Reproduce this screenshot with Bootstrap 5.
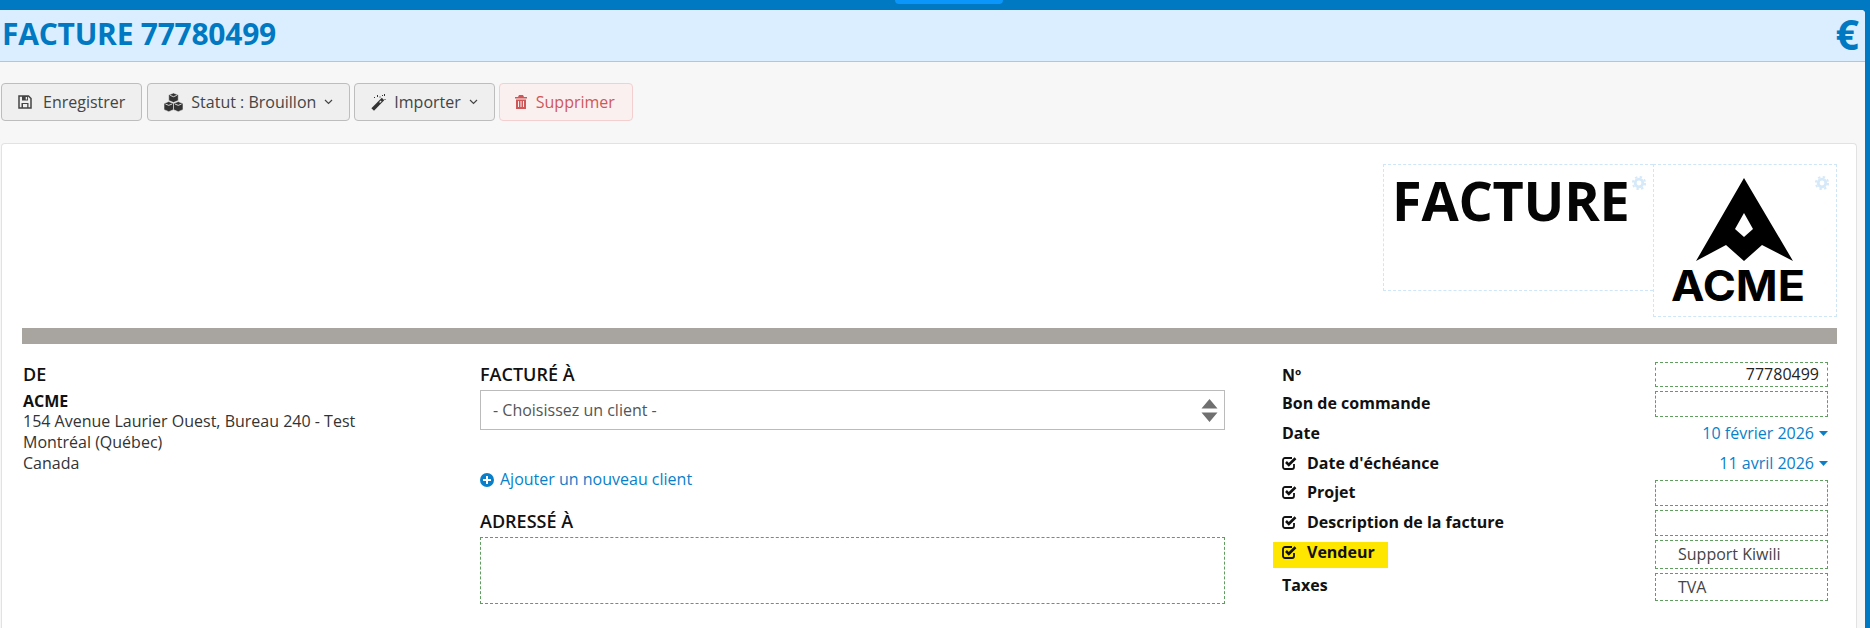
<!DOCTYPE html>
<html lang="fr">
<head>
<meta charset="utf-8">
<title>Facture 77780499</title>
<link href="https://cdn.jsdelivr.net/npm/bootstrap@5.3.0/dist/css/bootstrap.min.css" rel="stylesheet">
<style>
html,body{height:628px;overflow:hidden}
body{background:#0079c2;font-family:"Open Sans","Noto Sans",sans-serif;font-size:16px;line-height:21px;color:#333}
.top-strip{height:10px}
.top-tab{width:108px;height:4px;margin-left:895px;background:#0a96fb;border-radius:0 0 4px 4px}
.shell{margin-right:5px;height:618px;background:#f7f7f7;border-top-right-radius:4px}
.title-bar{height:52px;background:#dbeeff;border-bottom:1px solid #a9c9e2;border-top-right-radius:4px;padding:0 6px 3px 2px;color:#0079c2}
.title-text{font-size:30px;line-height:40px;font-weight:700;margin:0;letter-spacing:-.25px}
.euro{font-size:41px;font-weight:700;line-height:46px}
.tools{padding:21px 0 22px 1px;gap:4px}
.tool{height:38px;background:#efefef;border:1px solid #bdbdbd;color:#444;font-size:16px;padding:0 16px;border-radius:4px;gap:8px;line-height:20px}
.tool.danger{background:#fbf0f0;border-color:#f4cfcf;color:#cf5757;padding:0 17px 0 15px;gap:9px}
.tool svg{flex:none}
.tool-first{gap:11px;margin-right:1px}
.sheet{margin-left:1px;width:1856px;height:485px;background:#fff;border:1px solid #e2e2e2;border-bottom:0;border-radius:4px 4px 0 0;padding:20px 19px 0 20px}
.brand-row{height:164px}
.slot{border:1px dashed #cfe6f8;position:relative}
.slot-title{width:270px;height:127px;padding-left:8px;border-right:0}
.slot-logo{width:184px;height:153px}
.big-word{font-size:54px;font-weight:700;line-height:58px;color:#050505;margin-top:6px;letter-spacing:-.25px}
.gear{position:absolute;top:11px;right:7px}
.grey-bar{height:16px;background:#a8a5a1;margin-bottom:18px}
.col-from{width:458px;padding-left:1px}
.col-bill{width:745px;margin-right:57px}
.col-meta{width:546px}
.sec-head{font-size:18px;font-weight:600;line-height:22px;margin:1px 0 0;color:#111;text-transform:uppercase}
.from-lines{margin-top:6px}
.from-name{font-weight:700;color:#111;line-height:20px}
.client-select.form-select{height:40px;margin-top:5px;border:1px solid #bbb;border-radius:0;font-size:16px;padding:0 12px;color:#555;background-position:right 6px center;background-size:17px 25px;background-image:url("data:image/svg+xml,%3Csvg xmlns='http://www.w3.org/2000/svg' viewBox='0 0 17 25'%3E%3Cpath fill='%23707070' d='M8.5 1l8 9.500H.5zM8.5 24l-8-9.500h16z'/%3E%3C/svg%3E")}
.add-link{color:#0a7fc9;text-decoration:none;margin-top:39px;margin-bottom:20px;gap:6px}
.to-box{height:67px;margin-top:5px;border:1px dashed #5f9e5f}
.meta-row{margin-bottom:4px;height:26px}
.row-25{height:25px}
.row-30{height:30px;margin-bottom:0}
.row-29{height:29px}
.row-28{height:28px}
.push-top{margin-top:1px}
.push-bottom{margin-bottom:2px}
.meta-label{font-weight:700;color:#111;font-size:16px;gap:10px;line-height:20px}
.lifted{margin-top:-2px}
.meta-box{width:173px;height:100%;border:1px dashed #5f9e5f;padding:0 8px 0 22px;color:#444}
.meta-number{color:#222}
.meta-date{color:#0a7fc9;gap:5px}
.marked{background:#ffe600;height:26px;padding:0 13px 5px 9px;margin-left:-9px}
.tax-label{margin-top:-4px}
</style>
</head>
<body>
<div class="top-strip"><div class="top-tab"></div></div>
<div class="shell">
  <header class="title-bar d-flex justify-content-between align-items-center">
    <h1 class="title-text">FACTURE 77780499</h1>
    <span class="euro">€</span>
  </header>
  <div class="tools d-flex">
    <button type="button" class="btn tool tool-first d-flex align-items-center">
      <svg width="14" height="14" viewBox="0 0 14 14"><path fill="none" stroke="#444" stroke-width="1.5" d="M1 1h9.5L13 3.5V13H1z"/><path fill="#444" d="M4 1h6v4.5H4zM3.500 8h7v5h-7z"/><path fill="#efefef" d="M7.700 2h1.400v2.600H7.700zM5 9h4.200v3.200H5z"/></svg>
      <span>Enregistrer</span>
    </button>
    <button type="button" class="btn tool d-flex align-items-center">
      <svg width="19" height="19" viewBox="0 0 20 20"><g fill="#333" stroke="#efefef" stroke-width=".6"><path d="M10 0l5 2v6l-5 2-5-2V2z"/><path d="M5 9l5 2v6.500l-5 2.200-5-2.200V11z"/><path d="M15 9l5 2v6.500l-5 2.200-5-2.200V11z"/></g><path fill="none" stroke="#efefef" stroke-width=".9" d="M6.500 2.500l3.500 1.400 3.500-1.400M1.500 11.600L5 13l3.500-1.400M11.500 11.600L15 13l3.500-1.400"/></svg>
      <span class="d-flex align-items-center gap-2">Statut : Brouillon <svg width="9" height="6" viewBox="0 0 9 6"><path fill="none" stroke="#444" stroke-width="1.200" d="M1 1l3.500 3.500L8 1"/></svg></span>
    </button>
    <button type="button" class="btn tool d-flex align-items-center">
      <svg width="15" height="17" viewBox="0 0 15 17"><path fill="#333" d="M10.800 3.800l2.400 2.400L3 16.800.4 14.200z"/><path fill="#efefef" d="M9.800 6.500l.8.8-1.600 1.600-.8-.8z"/><path fill="#333" d="M6 1h1v2H6zM13 0h1v2h-1zM11 1h1v1h-1zM13.500 5h1v1h-1zM3 3h1v1H3zM8.500 2.500h1v1h-1z"/></svg>
      <span class="d-flex align-items-center gap-2">Importer <svg width="9" height="6" viewBox="0 0 9 6"><path fill="none" stroke="#444" stroke-width="1.200" d="M1 1l3.500 3.500L8 1"/></svg></span>
    </button>
    <button type="button" class="btn tool danger d-flex align-items-center">
      <svg width="12" height="14" viewBox="0 0 12 14"><path fill="#cf5757" d="M4 0h4l1 2h3v1.500H0V2h3zM1 4.500h10V14H1z"/><path fill="#fbf0f0" d="M3 6h1v6H3zM5.500 6h1v6h-1zM8 6h1v6H8z"/></svg>
      <span>Supprimer</span>
    </button>
  </div>
  <main class="sheet">
    <div class="brand-row d-flex justify-content-end align-items-start">
      <div class="slot slot-title">
        <div class="big-word">FACTURE</div>
        <svg class="gear" width="14" height="14" viewBox="0 0 14 14"><circle cx="7" cy="7" r="3.800" fill="none" stroke="#d6e9f9" stroke-width="2.800"/><circle cx="7" cy="7" r="6.100" fill="none" stroke="#d6e9f9" stroke-width="2" stroke-dasharray="2.400 2.390"/></svg>
      </div>
      <div class="slot slot-logo">
        <svg width="182" height="151" viewBox="0 0 182 151">
          <path fill="#000" fill-rule="evenodd" d="M90 13L139 96 108 80 90 96 72 80 42 96zM90 48l-9 16 9 8 9-8z"/>
          <text x="84" y="136" text-anchor="middle" font-family="Inter,'Liberation Sans',sans-serif" font-weight="700" font-size="43" textLength="134" lengthAdjust="spacingAndGlyphs" fill="#000">ACME</text>
        </svg>
        <svg class="gear" width="14" height="14" viewBox="0 0 14 14"><circle cx="7" cy="7" r="3.800" fill="none" stroke="#d6e9f9" stroke-width="2.800"/><circle cx="7" cy="7" r="6.100" fill="none" stroke="#d6e9f9" stroke-width="2" stroke-dasharray="2.400 2.390"/></svg>
      </div>
    </div>
    <div class="grey-bar"></div>
    <div class="d-flex align-items-start">
      <section class="col-from">
        <h2 class="sec-head">DE</h2>
        <div class="from-lines">
          <div class="from-name">ACME</div>
          <div>154 Avenue Laurier Ouest, Bureau 240 - Test</div>
          <div>Montréal (Québec)</div>
          <div>Canada</div>
        </div>
      </section>
      <section class="col-bill">
        <h2 class="sec-head">FACTURÉ À</h2>
        <select class="form-select client-select"><option>- Choisissez un client -</option></select>
        <a href="#" class="add-link d-flex align-items-center">
          <svg width="14" height="14" viewBox="0 0 14 14"><circle cx="7" cy="7" r="7" fill="#0a7fc9"/><path fill="#fff" d="M6 3h2v3h3v2H8v3H6V8H3V6h3z"/></svg>
          <span>Ajouter un nouveau client</span>
        </a>
        <h2 class="sec-head">ADRESSÉ À</h2>
        <div class="to-box"></div>
      </section>
      <section class="col-meta">
        <div class="meta-row row-25 d-flex justify-content-between align-items-center">
          <div class="meta-label">Nº</div>
          <div class="meta-box meta-number d-flex align-items-center justify-content-end">77780499</div>
        </div>
        <div class="meta-row d-flex justify-content-between align-items-center mb-0">
          <div class="meta-label lifted">Bon de commande</div>
          <div class="meta-box"></div>
        </div>
        <div class="meta-row row-30 push-top d-flex justify-content-between align-items-center">
          <div class="meta-label">Date</div>
          <div class="meta-date d-flex align-items-center">10 février 2026 <svg width="9" height="5" viewBox="0 0 9 5"><path fill="#0a7fc9" d="M0 0h9L4.500 5z"/></svg></div>
        </div>
        <div class="meta-row row-30 push-bottom d-flex justify-content-between align-items-center">
          <div class="meta-label d-flex align-items-center"><svg width="15" height="14" viewBox="0 0 15 14"><use href="#chk"/></svg>Date d'échéance</div>
          <div class="meta-date d-flex align-items-center">11 avril 2026 <svg width="9" height="5" viewBox="0 0 9 5"><path fill="#0a7fc9" d="M0 0h9L4.500 5z"/></svg></div>
        </div>
        <div class="meta-row d-flex justify-content-between align-items-center">
          <div class="meta-label lifted d-flex align-items-center"><svg width="15" height="14" viewBox="0 0 15 14"><use href="#chk"/></svg>Projet</div>
          <div class="meta-box"></div>
        </div>
        <div class="meta-row d-flex justify-content-between align-items-center">
          <div class="meta-label lifted d-flex align-items-center"><svg width="15" height="14" viewBox="0 0 15 14"><use href="#chk"/></svg>Description de la facture</div>
          <div class="meta-box"></div>
        </div>
        <div class="meta-row row-29 d-flex justify-content-between align-items-center">
          <div class="meta-label marked d-flex align-items-center"><svg width="15" height="14" viewBox="0 0 15 14"><use href="#chk"/></svg>Vendeur</div>
          <div class="meta-box d-flex align-items-center">Support Kiwili</div>
        </div>
        <div class="meta-row row-28 d-flex justify-content-between align-items-center">
          <div class="meta-label tax-label">Taxes</div>
          <div class="meta-box d-flex align-items-center">TVA</div>
        </div>
      </section>
    </div>
  </main>
</div>
<svg width="0" height="0" class="d-block"><defs><g id="chk"><path fill="none" stroke="#111" stroke-width="1.800" d="M12 8v3a2 2 0 0 1-2 2H3a2 2 0 0 1-2-2V4a2 2 0 0 1 2-2h7"/><path fill="none" stroke="#111" stroke-width="2.600" d="M4 6l2.800 2.800L13.500 2.200"/></g></defs></svg>
</body>
</html>
